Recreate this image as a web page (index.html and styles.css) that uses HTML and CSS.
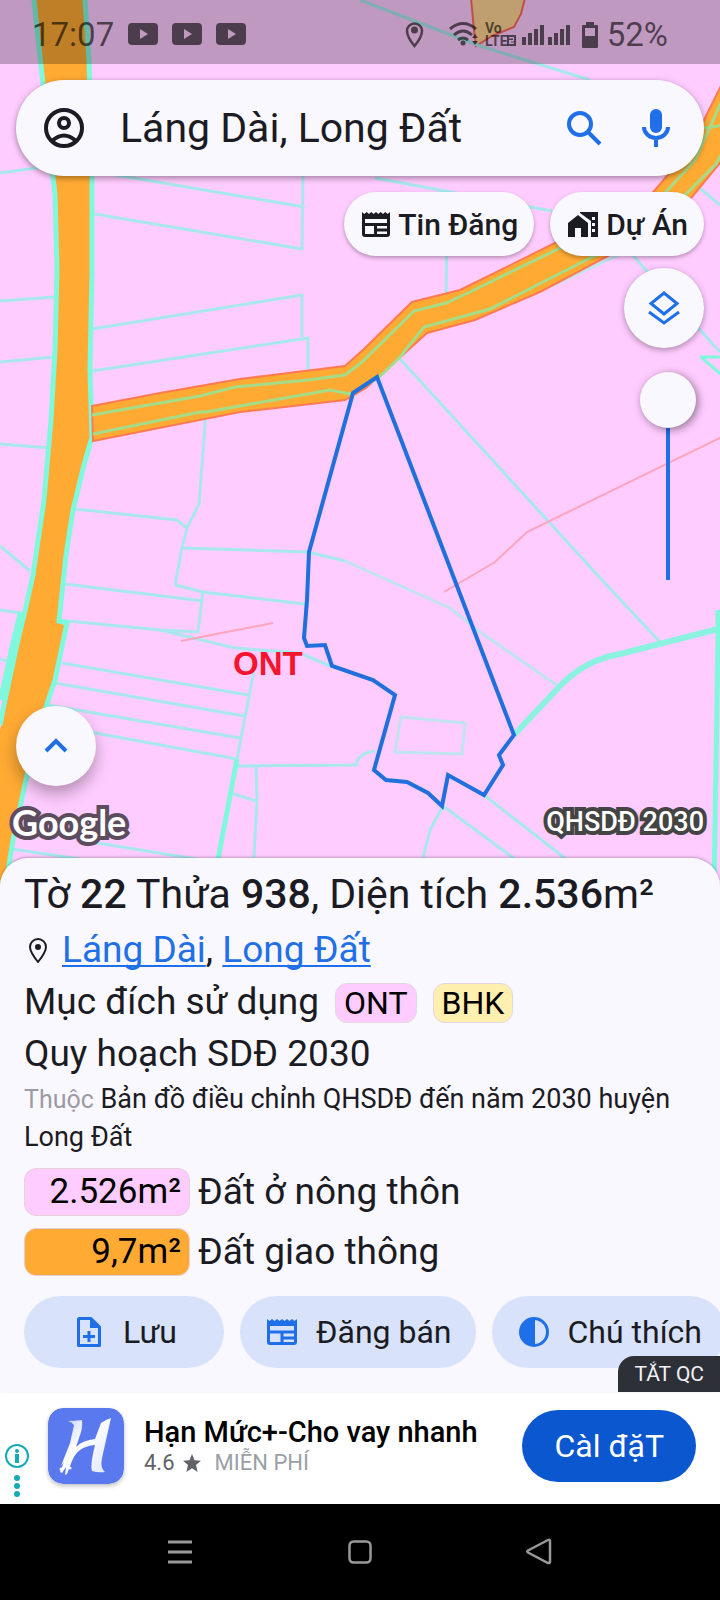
FILE: index.html
```html
<!DOCTYPE html>
<html lang="vi">
<head>
<meta charset="utf-8">
<meta name="viewport" content="width=device-width, initial-scale=1">
<title>Láng Dài, Long Đất</title>
<link rel="stylesheet" href="styles.css">
</head>
<body>
<main class="map">
  <svg class="map-canvas" viewBox="0 0 720 890" preserveAspectRatio="xMidYMin slice" aria-hidden="true">
    <rect width="720" height="890" fill="#ffccff"/>
    <path class="planned" d="M471 -2L474 30 476 46 492 36 514 27 521 14 525 -2z"/>
    <!-- parcel boundaries -->
    <g class="parcel">
      <path d="M0 173L50 166M110 174L305 207M303 170L302 249 95 214M360 0L480 46 590 80M375 178L440 190 552 211M440 190L447 230 446 303M690 180L720 205M632 254L650 275 700 330 720 352"/>
      <path d="M0 301L55 297M0 362L54 357M92 329L302 295 302 337M92 371L308 338 308 380M0 444L50 448M206 412L199 504 187 528 182 548 175 585M75 509L177 520 187 528M182 548L308 552 345 561M0 546L30 571"/>
      <path d="M65 584L203 601M175 585L203 592 305 604M203 592L198 632 160 630 58 620M160 630L235 648 300 653 330 666M0 610L20 613M0 659L6 661M62 663L248 695M55 683L244 716M48 705L240 738M90 732L237 759M256 660L237 759M237 766L356 765Q358 753 375 751M256 767L257 800 252 890M231 793L256 801M85 841L190 858 260 870M12 849L100 862"/>
      <path d="M400 359L602 580 660 642M443 806L430 830 420 870M443 806L530 870M484 795L575 866"/>
      <path class="faint" d="M345 561L450 608 480 632 558 686M530 296L640 245M401 717L465 723 462 754 395 752z"/>
    </g>
    <!-- main roads -->
    <path class="road" d="M36 0L44 75 52 150 57 195 58 270 56 350 52 420 45 500 34 580 26 612 18 645 7 700 0 730V890H6L11 850 27 775 47 707 55 680 67 623H58L62 590 66 555 73 510 84 465 92 437 90 370 91 270 91 176 88 60 84 0z"/>
    <path class="canal" d="M34 0L42 75 50 150 55 195 57 270 55 350 51 420 44 500 33 575 25 611 17 644 5 700 0 725"/>
    <path class="canal" d="M85 0L89 60 92 176 92 270 90 370 92 437 84 465 73 510 66 555 59 621 67 623 55 680 46 707 27 775 13 840 5 890"/>
    <path class="canal canal-wide" d="M21 612L13 645 1 700"/>
    <path class="road side-road" d="M92 406L160 393 240 379 345 366 364 349 412 302 460 290 555 243 650 196 672 170 704 120 724 80V158L692 197 610 255 540 292 475 320 427 333 366 388 345 400 240 412 93 441z"/>
    <path class="road-line" d="M92 415L200 396 235 387 308 380 345 375 362 362 414 311 446 303 470 292 560 248 655 204 695 160 724 96M93 434L200 412 206 412 330 390 350 394 378 378 400 357 424 327 490 309 590 258 650 230 692 188 716 164 724 150M690 120L706 128 724 125"/>
    <!-- stream -->
    <path class="stream" d="M514 735L560 686Q585 660 620 654L718 629"/>
    <path class="canal" d="M718 610V640L714 890M237 759L216 870"/>
    <path class="canal thin" d="M700 357H724M702 358L724 377"/>
    <path class="contour" d="M444 592L495 562 527 532 724 436M181 641L273 623"/>
    <text class="zone" x="233" y="675">ONT</text>
    <path class="selected" d="M353 393L377 377 514 735 499 755 503 765 484 795 448 775 442 806 428 793 407 782 386 780 374 770 395 695 373 680 332 666 325 645 307 646 304 638 307 600 309 552z"/>
  </svg>

  <header class="status">
    <span class="clock">17:07</span>
    <svg class="yt" viewBox="0 0 30 22"><path fill-rule="evenodd" d="M4 0H26Q30 0 30 4V18Q30 22 26 22H4Q0 22 0 18V4Q0 0 4 0zM12 6V16L20 11z"/></svg>
    <svg class="yt" viewBox="0 0 30 22"><path fill-rule="evenodd" d="M4 0H26Q30 0 30 4V18Q30 22 26 22H4Q0 22 0 18V4Q0 0 4 0zM12 6V16L20 11z"/></svg>
    <svg class="yt" viewBox="0 0 30 22"><path fill-rule="evenodd" d="M4 0H26Q30 0 30 4V18Q30 22 26 22H4Q0 22 0 18V4Q0 0 4 0zM12 6V16L20 11z"/></svg>
    <svg class="status-signals" viewBox="0 0 194 32" aria-hidden="true">
      <path d="M9.500 28Q2 19 2 13A7.500 7.500 0 0 1 17 13Q17 19 9.500 28z" fill="none" stroke="currentColor" stroke-width="2.500"/><circle cx="9.500" cy="12" r="3.500"/>
      <g fill="none" stroke="currentColor" stroke-width="3"><path d="M45 11Q58 0 71 11M49 17Q58 9 67 17M53 22Q58 18 63 22"/></g><circle cx="58" cy="25" r="2.500"/>
      <path d="M67 20L70 16 73 20zM67 23L70 27 73 23z"/>
      <text x="80" y="15" class="volte">Vo</text><text x="80" y="28" class="volte">LTE</text>
      <path fill-rule="evenodd" d="M102 17H111V28H102zM104 19V20.500H108V22H104V26H109V24.500H106V23.500H109V19z"/>
      <path d="M117 19H121V27H117zM123 15H127V27H123zM129 11H133V27H129zM135 7H139V27H135zM143 19H147V27H143zM149 15H153V27H149zM155 11H159V27H155zM161 7H165V27H161z"/>
      <path fill-rule="evenodd" d="M181 4H189V7H192Q193 7 193 8V29Q193 30 192 30H178Q177 30 177 29V8Q177 7 178 7H181zM180 10V18H190V10z"/>
    </svg>
    <span class="battery">52%</span>
  </header>

  <div class="overlay">
    <form class="search">
      <button class="icon-btn" type="button" aria-label="Tài khoản">
        <svg width="40" height="40" viewBox="0 0 40 40" fill="none" stroke="#1b1b23" stroke-width="4"><circle cx="20" cy="20" r="18"/><circle cx="20" cy="15" r="5"/><path d="M8 33Q20 22 32 33"/></svg>
      </button>
      <input class="search-text" type="text" value="Láng Dài, Long Đất" aria-label="Tìm kiếm">
      <button class="icon-btn" type="submit" aria-label="Tìm">
        <svg width="36" height="36" viewBox="0 0 36 36" fill="none" stroke="#1f6fe8" stroke-width="4"><circle cx="14" cy="14" r="11"/><path d="M22 22L34 34"/></svg>
      </button>
      <button class="icon-btn" type="button" aria-label="Giọng nói">
        <svg width="28" height="40" viewBox="0 0 28 40"><rect x="8" y="1" width="12" height="24" rx="6" fill="#1f6fe8"/><path d="M2 19A12 11 0 0 0 26 19M14 30V39" fill="none" stroke="#1f6fe8" stroke-width="4"/></svg>
      </button>
    </form>
    <div class="chips">
      <button class="chip" type="button">
        <svg width="28" height="26" viewBox="0 0 28 26"><path fill="currentColor" fill-rule="evenodd" d="M0 1L2.300 3 4.600 1 7 3 9.300 1 11.600 3 14 1 16.300 3 18.600 1 21 3 23.300 1 25.600 3 28 1V23Q28 26 25 26H3Q0 26 0 23zM3 8V12H25V8zM3 15V23H12V15zM15 15V17.500H25V15zM15 20.500V23H25V20.500z"/></svg>
        Tin Đăng
      </button>
      <button class="chip" type="button">
        <svg width="30" height="26" viewBox="0 0 30 26"><path fill="currentColor" fill-rule="evenodd" d="M0 12L10 4 20 12V26H13V17H7V26H0zM12 1H30V26H23V10L12 2zM24 6V9H27V6zM24 12V15H27V12zM24 18V21H27V18z"/></svg>
        Dự Án
      </button>
    </div>
    <div class="side">
      <button class="round" type="button" aria-label="Lớp bản đồ">
        <svg width="32" height="36" viewBox="0 0 32 36" fill="none" stroke="#1f6fe8" stroke-width="3"><path d="M16 3L29 13.500 16 24 3 13.500z"/><path d="M1 22L16 33 31 22"/></svg>
      </button>
      <input class="opacity" type="range" min="0" max="100" value="0" aria-label="Độ trong suốt">
    </div>
    <div class="map-foot">
      <button class="round lifted" type="button" aria-label="Mở rộng">
        <svg width="24" height="16" viewBox="0 0 24 16" fill="none" stroke="#1f6fdd" stroke-width="4"><path d="M2 13L12 3 22 13"/></svg>
      </button>
      <div class="credits"><span class="google">Google</span><span class="layer-name">QHSDĐ 2030</span></div>
    </div>
  </div>
</main>

<section class="sheet">
  <h1 class="title">Tờ <b>22</b> Thửa <b>938</b>, Diện tích <b>2.536</b>m²</h1>
  <p class="row place">
    <svg width="26" height="26" viewBox="0 0 26 26"><path d="M14 25Q6 15 6 10A8 8 0 0 1 22 10Q22 15 14 25z" fill="none" stroke="#1b1b23" stroke-width="2"/><circle cx="14" cy="10" r="3" fill="#1b1b23"/></svg>
    <span><a href="#lang-dai">Láng Dài</a>, <a href="#long-dat">Long Đất</a></span>
  </p>
  <p class="row use">Mục đích sử dụng <span class="tag tag-pink">ONT</span><span class="tag tag-yellow">BHK</span></p>
  <p class="row">Quy hoạch SDĐ 2030</p>
  <p class="note"><span class="muted">Thuộc</span> Bản đồ điều chỉnh QHSDĐ đến năm 2030 huyện Long Đất</p>
  <ul class="areas">
    <li><span class="area tag-pink">2.526m²</span>Đất ở nông thôn</li>
    <li><span class="area tag-orange">9,7m²</span>Đất giao thông</li>
  </ul>
  <div class="actions">
    <button class="action" type="button">
      <svg width="36" height="36" viewBox="0 0 36 36"><path d="M8 4.500H20L28.500 13V31.500H7.500V5z" fill="none" stroke="#1f6fe8" stroke-width="3" stroke-linejoin="round"/><path d="M19 4L29 14H19z" fill="#1f6fe8"/><path d="M18 17V28M12 22.500H24" stroke="#1f6fe8" stroke-width="3"/></svg>
      Lưu
    </button>
    <button class="action" type="button">
      <svg width="36" height="36" viewBox="-3 -4 36 36"><path fill="#1f6fe8" fill-rule="evenodd" d="M0 1L2.500 3 5 1 7.500 3 10 1 12.500 3 15 1 17.500 3 20 1 22.500 3 25 1 27.500 3 30 1V24Q30 27 27 27H3Q0 27 0 24zM3 8V12.500H27V8zM3 15.500V24H13.500V15.500zM16.500 15.500V18.500H27V15.500zM16.500 21.500V24H27V21.500z"/></svg>
      Đăng bán
    </button>
    <button class="action" type="button">
      <svg width="36" height="36" viewBox="0 0 36 36"><circle cx="18" cy="18" r="13.500" fill="none" stroke="#1f6fe8" stroke-width="3"/><path d="M19 4V32A14 14 0 0 1 19 4z" fill="#1f6fe8"/></svg>
      Chú thích
    </button>
  </div>
  <button class="hide-ad" type="button">TẮT QC</button>
</section>

<aside class="ad">
  <div class="ad-info">
    <svg width="24" height="54" viewBox="0 0 24 54" fill="#14aab8"><circle cx="12" cy="12" r="11" fill="none" stroke="#14aab8" stroke-width="2"/><circle cx="12" cy="7" r="2"/><path d="M10 10H14V19H10z"/><circle cx="12" cy="34" r="3"/><circle cx="12" cy="42" r="3"/><circle cx="12" cy="50" r="3"/></svg>
  </div>
  <svg class="ad-logo" viewBox="0 0 76 76" aria-hidden="true">
    <defs><linearGradient id="h" x1="0" y1="0" x2="1" y2="1"><stop offset="0" stop-color="#b9c8ff"/><stop offset=".4" stop-color="#fff"/><stop offset="1" stop-color="#dfe6ff"/></linearGradient></defs>
    <rect width="76" height="76" rx="15" fill="#5b79ee"/>
    <path d="M20 13Q27 13 34 12Q35 20 31 30L28 39Q35 32 47 31L53 15Q57 12 63 10L54 50Q52 60 57 64Q50 65 44 63Q42 57 47 37Q30 38 24 53L19 66 17 67 18 59 14 65 12 64 16 54 13 58 22 35 26 17Q24 14 20 13z" fill="url(#h)"/>
    <circle cx="13" cy="61" r="1.500" fill="#fff"/><circle cx="22" cy="60" r="1.500" fill="#fff"/>
  </svg>
  <div class="ad-text">
    <strong class="ad-title">Hạn Mức+-Cho vay nhanh</strong>
    <span class="ad-meta">4.6 <svg width="18" height="18" viewBox="0 0 18 18"><path fill="#5f6368" d="M9 0L11.500 6.200 18 6.700 13 11 14.600 18 9 14.200 3.400 18 5 11 0 6.700 6.500 6.200z"/></svg> <span class="free">MIỄN PHÍ</span></span>
  </div>
  <button class="install" type="button">Càl đặT</button>
</aside>

<nav class="system-nav">
  <button type="button" aria-label="Gần đây"><svg width="24" height="24" viewBox="0 0 24 24"><path d="M0 2H24M0 12H24M0 22H24" stroke="#999" stroke-width="3"/></svg></button>
  <button type="button" aria-label="Màn hình chính"><svg width="24" height="24" viewBox="0 0 24 24"><rect x="1.500" y="1.500" width="21" height="21" rx="4" fill="none" stroke="#999" stroke-width="2.500"/></svg></button>
  <button type="button" aria-label="Quay lại"><svg width="28" height="28" viewBox="0 0 28 28"><path d="M2 12.500Q0.500 13.500 2 14.500L22 25Q24 25.500 24 24V3Q24 1 22 2z" fill="none" stroke="#999" stroke-width="2.500"/></svg></button>
</nav>
</body>
</html>
```

FILE: styles.css
```css
* {
  box-sizing: border-box;
}

body {
  margin: 0;
  min-height: 100vh;
  display: flex;
  flex-direction: column;
  overflow-x: hidden;
  font-family: Roboto, "Noto Sans", sans-serif;
  color: #1b1b23;
  background: #faf8ff;
}

button,
input {
  margin: 0;
  padding: 0;
  border: 0;
  font: inherit;
  color: inherit;
  background: none;
}

button svg {
  flex: none;
}

/* Map */

.map {
  position: relative;
  flex: 1;
  display: flex;
  flex-direction: column;
}

.map-canvas {
  position: absolute;
  top: 0;
  left: 0;
  width: 100%;
  height: calc(100% + 32px);
}

.parcel {
  fill: none;
  stroke: #a8e8ec;
  stroke-width: 3;
}

.faint {
  stroke: #bfe4f0;
}

.planned {
  fill: #ffd494;
  stroke: #ff6a5c;
  stroke-width: 2;
}

.road {
  fill: #ffaa33;
}

.side-road {
  stroke: #ff7a50;
  stroke-width: 2;
}

.road-line {
  fill: none;
  stroke: #a5dc88;
  stroke-width: 3;
}

.canal {
  fill: none;
  stroke: #80f8dc;
  stroke-width: 5;
}

.canal-wide {
  stroke-width: 6;
}

.thin {
  stroke-width: 3;
}

.stream {
  fill: none;
  stroke: #8cf2e0;
  stroke-width: 6;
}

.contour {
  fill: none;
  stroke: #ffa4bc;
  stroke-width: 2;
}

.zone {
  font: bold 33px "Liberation Sans", sans-serif;
  fill: #f5142d;
}

.selected {
  fill: none;
  stroke: #1f6fdd;
  stroke-width: 4;
}

.status {
  position: relative;
  display: flex;
  align-items: center;
  gap: 14px;
  height: 64px;
  padding: 4px 52px 0 32px;
  font-size: 33px;
  color: rgba(0, 0, 0, 0.6);
  background: rgba(0, 0, 0, 0.25);
}

.status svg {
  fill: currentColor;
}

.yt {
  width: 30px;
  height: 22px;
}

.status-signals {
  width: 194px;
  height: 32px;
  margin-left: auto;
}

.volte {
  font: bold 14px Roboto, sans-serif;
}

.battery {
  margin-left: -6px;
}

.overlay {
  position: relative;
  flex: 1;
  display: flex;
  flex-direction: column;
  padding: 16px 16px 0;
}

.search {
  display: flex;
  align-items: center;
  height: 96px;
  padding: 0 12px;
  border-radius: 48px;
  background: #faf8ff;
  box-shadow: 0 2px 6px rgba(0, 0, 0, 0.4);
}

.icon-btn {
  display: grid;
  place-items: center;
  flex: none;
  width: 72px;
  height: 72px;
}

.search-text {
  flex: 1;
  min-width: 0;
  padding-left: 20px;
  font-size: 41px;
  outline: 0;
}

.chips {
  display: flex;
  justify-content: flex-end;
  gap: 16px;
  margin-top: 16px;
}

.chip {
  display: flex;
  align-items: center;
  gap: 8px;
  height: 64px;
  padding: 0 16px 0 18px;
  border-radius: 32px;
  font-size: 30px;
  font-weight: 500;
  background: #faf8ff;
  box-shadow: 0 2px 4px rgba(0, 0, 0, 0.3);
}

.side {
  display: flex;
  flex-direction: column;
  align-items: flex-end;
  gap: 24px;
  margin-top: 12px;
}

.round {
  display: grid;
  place-items: center;
  width: 80px;
  height: 80px;
  border-radius: 50%;
  background: #faf8ff;
  box-shadow: 0 2px 6px rgba(0, 0, 0, 0.35);
}

.lifted {
  box-shadow: 0 8px 16px rgba(0, 0, 0, 0.3);
}

.opacity {
  appearance: none;
  writing-mode: vertical-lr;
  width: 56px;
  height: 208px;
  margin-right: 8px;
  background: linear-gradient(#1f6fe8, #1f6fe8) center / 4px 100% no-repeat;
}

.opacity::-webkit-slider-thumb {
  appearance: none;
  width: 56px;
  height: 56px;
  border-radius: 50%;
  background: #faf8ff;
  box-shadow: 2px 2px 8px rgba(0, 0, 0, 0.45);
}

.map-foot {
  margin-top: auto;
}

.credits {
  display: flex;
  align-items: center;
  justify-content: space-between;
  height: 72px;
  color: #fff;
}

.google {
  margin-left: -4px;
  font: 700 36px/48px Lato, sans-serif;
  -webkit-text-stroke: 8px #5c4c5e;
  paint-order: stroke fill;
}

.layer-name {
  font-size: 27px;
  font-weight: 500;
  -webkit-text-stroke: 8px #444;
  paint-order: stroke fill;
}

/* Parcel details */

.sheet {
  position: relative;
  padding: 10px 24px 24px;
  border-radius: 28px 28px 0 0;
  background: #faf8ff;
  box-shadow: 0 -1px 3px rgba(0, 0, 0, 0.25);
}

.title {
  margin: 0 0 4px;
  font-size: 41px;
  font-weight: 400;
  line-height: 52px;
}

.title b {
  font-weight: 500;
}

.row {
  display: flex;
  align-items: center;
  height: 52px;
  margin: 0;
  font-size: 37px;
  line-height: 52px;
}

.place {
  gap: 12px;
}

.place a {
  color: #1f6fe8;
  text-decoration-thickness: 2px;
  text-underline-offset: 3px;
  text-decoration-skip-ink: none;
}

.use {
  align-items: baseline;
  gap: 16px;
}

.tag {
  padding: 0 8px;
  border: 1px solid #e3d5e3;
  border-radius: 12px;
  font-size: 32px;
  line-height: 38px;
  color: #000;
}

.tag-pink {
  background: #ffccff;
}

.tag-yellow {
  background: #fff0b0;
}

.tag-orange {
  background: #ffaa33;
}

.note {
  margin: 0;
  font-size: 27px;
  line-height: 38px;
}

.muted {
  font-size: 25px;
  line-height: 30px;
  color: #9c9aa2;
}

.areas {
  display: grid;
  gap: 12px;
  margin: 12px 0 20px;
  padding: 0;
  list-style: none;
}

.areas li {
  display: flex;
  align-items: center;
  gap: 8px;
  font-size: 37px;
  line-height: 48px;
}

.area {
  width: 166px;
  padding-right: 8px;
  border: 1px solid #e5cfd8;
  border-radius: 12px;
  font-size: 35px;
  line-height: 46px;
  text-align: right;
  color: #000;
}

.actions {
  display: flex;
  gap: 16px;
  margin-right: -24px;
  overflow: hidden;
}

.action {
  display: flex;
  align-items: center;
  justify-content: center;
  flex: none;
  gap: 16px;
  min-width: 200px;
  height: 72px;
  padding: 0 24px;
  border-radius: 36px;
  font-size: 32px;
  background: #d8e2fb;
}

.hide-ad {
  position: absolute;
  right: 0;
  bottom: 0;
  height: 36px;
  padding: 0 16px;
  border-radius: 16px 0 0 0;
  font-size: 21px;
  color: #f1f0f7;
  background: #2e3038;
}

/* Ad banner */

.ad {
  display: flex;
  align-items: center;
  height: 112px;
  padding-right: 24px;
  background: #fff;
}

.ad-info {
  align-self: flex-end;
  width: 48px;
  padding: 0 5px 2px;
}

.ad-logo {
  flex: none;
  width: 76px;
  height: 76px;
  margin-bottom: 4px;
  border-radius: 15px;
  box-shadow: 0 2px 4px rgba(0, 0, 0, 0.25);
}

.ad-text {
  flex: 1;
  display: flex;
  flex-direction: column;
  padding: 0 0 4px 20px;
}

.ad-title {
  font-size: 29px;
  font-weight: 500;
  line-height: 34px;
  color: #000;
}

.ad-meta {
  display: flex;
  align-items: center;
  gap: 8px;
  font-size: 22px;
  line-height: 28px;
  color: #5f6368;
}

.free {
  margin-left: 6px;
  color: #9aa0a6;
}

.install {
  height: 72px;
  margin-bottom: 4px;
  padding: 0 32px;
  border-radius: 36px;
  font-size: 32px;
  color: #fff;
  background: #0b57d0;
}

/* System navigation */

.system-nav {
  display: grid;
  grid-template-columns: repeat(3, 1fr);
  height: 96px;
  padding: 0 12.5%;
  background: #000;
}

.system-nav button {
  display: grid;
  place-items: center;
}
```
